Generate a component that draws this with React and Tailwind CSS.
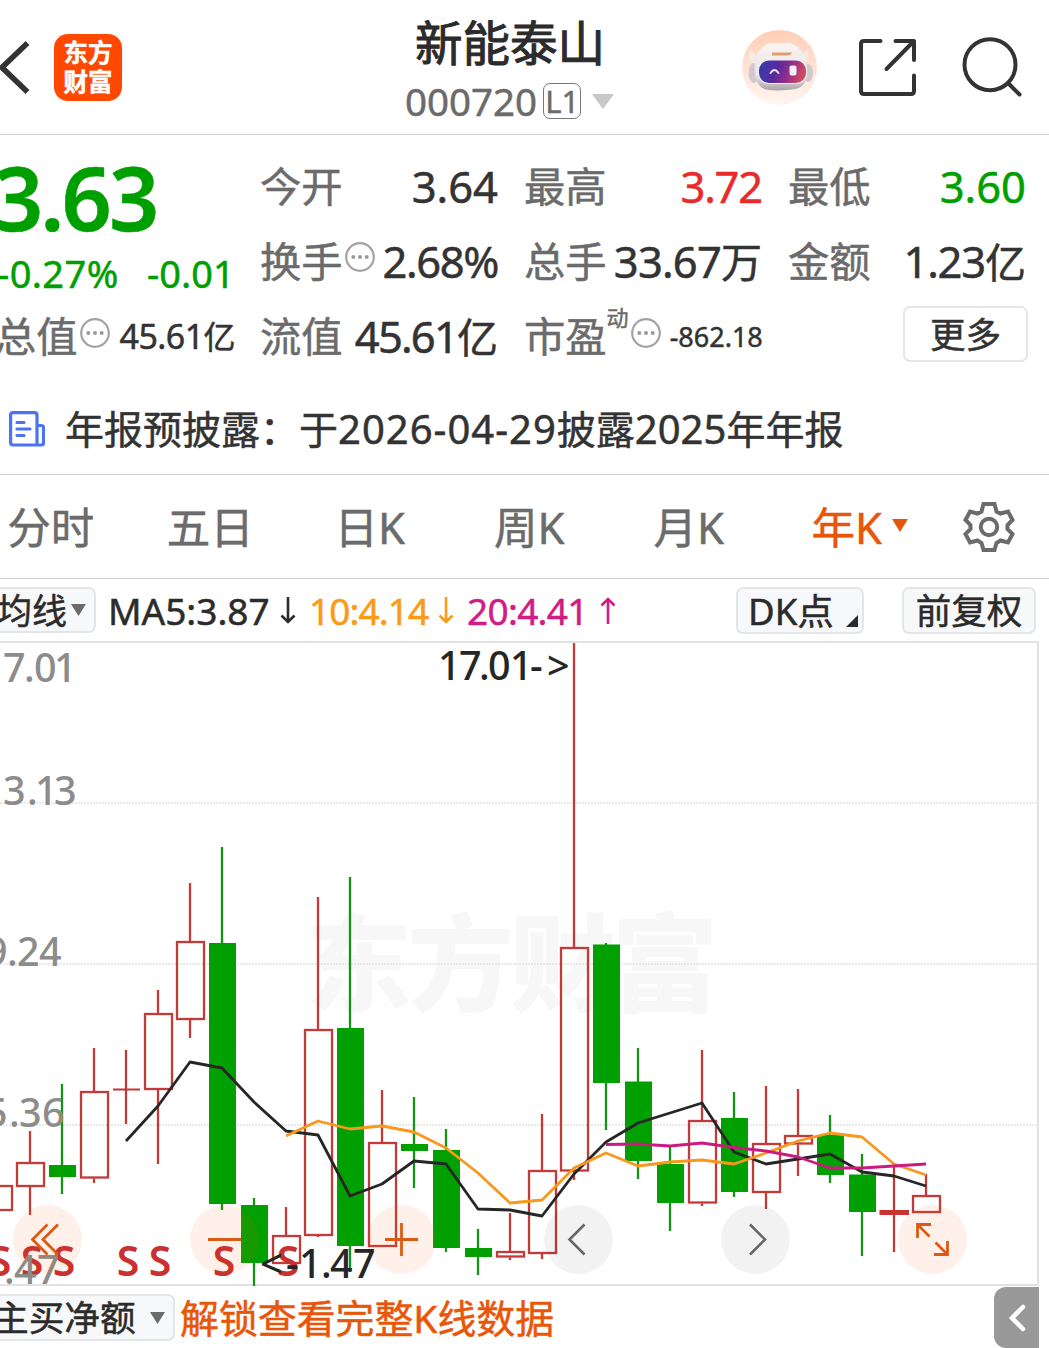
const candles = [
  // [x, high, bodyTop, bodyBottom, low, direction]
  [-2, 1185, 1185, 1211, 1211, "up"],
  [30, 1131, 1162, 1187, 1215, "up"],
  [62, 1084, 1165, 1177, 1194, "down"],
  [94, 1048, 1091, 1178.5, 1183, "up"],
  [126, 1050, 1088.5, 1090.5, 1124, "flat"],
  [158, 990, 1013, 1090, 1164, "up"],
  [190, 883, 941, 1020, 1038, "up"],
  [222, 847, 943, 1204, 1210, "down"],
  [254, 1198, 1205, 1263, 1286, "down"],
  [286, 1207, 1235, 1264, 1264, "up"],
  [318, 897, 1029, 1236, 1237, "up"],
  [350, 877, 1028, 1246, 1272, "down"],
  [382, 1090, 1142, 1247, 1247, "up"],
  [414, 1097, 1144, 1151, 1188, "down"],
  [446, 1129, 1150, 1248, 1252, "down"],
  [478, 1229, 1248, 1257, 1275, "down"],
  [510, 1213, 1251, 1257.5, 1260, "up"],
  [542, 1114, 1170, 1254, 1259, "up"],
  [574, 643, 947, 1171.5, 1180, "up"],
  [606, 943, 944.5, 1083, 1130, "down"],
  [638, 1048, 1081.5, 1161, 1179, "down"],
  [670, 1146, 1164, 1203, 1231, "down"],
  [702, 1050, 1120, 1203.5, 1206, "up"],
  [734, 1092, 1118, 1192, 1197, "down"],
  [766, 1086, 1143, 1193, 1209, "up"],
  [798, 1089, 1135, 1144.5, 1176, "up"],
  [830, 1115, 1135, 1175, 1183, "down"],
  [862, 1154, 1174.5, 1212, 1256, "down"],
  [894, 1163, 1210, 1215, 1252, "flat"],
  [926, 1174, 1195, 1213, 1213, "up"],
];

const ma5 =
  "126,1141 158,1106 190,1062 222,1068 254,1102 286,1131 318,1135 350,1196 382,1184 414,1161 446,1164 478,1209 510,1210 542,1216 574,1174 606,1142 638,1123 670,1113 702,1103 734,1152 766,1164 798,1159 830,1154 862,1172 894,1176 926,1186";
const ma10 =
  "286,1136 318,1121 350,1129 382,1126 414,1132 446,1148 478,1173 510,1203 542,1200 574,1168 606,1153 638,1166 670,1162 702,1160 734,1164 766,1153 798,1141 830,1133 862,1137 894,1164 926,1175";
const ma20 =
  "606,1144.5 638,1144 670,1146 702,1143 734,1147.5 766,1151 798,1157 830,1168 862,1168 894,1166 926,1164";

const sellMarks = [0, 32, 64, 128, 160, 224, 288];

const tabs = ["分时", "五日", "日K", "周K", "月K"];

const More = () => (
  <svg className="w-[30px] h-[30px] shrink-0" viewBox="0 0 30 30" fill="none">
    <circle cx="15" cy="15" r="13.8" stroke="#a3a3a3" strokeWidth="2.2" />
    <circle cx="8.3" cy="15" r="2" fill="#999" />
    <circle cx="15" cy="15" r="2" fill="#999" />
    <circle cx="21.7" cy="15" r="2" fill="#999" />
  </svg>
);

const Arrow = ({ up }) => (
  <svg
    className={up ? "w-4 h-[27px] rotate-180" : "w-4 h-[27px]"}
    viewBox="0 0 16 27"
    fill="none"
    stroke="currentColor"
    strokeWidth="2.6"
  >
    <path d="M8 0v24.5M1.5 18.5L8 25l6.500-6.500" />
  </svg>
);

const Header = () => (
  <header className="flex items-start h-[135px] border-b border-[#d3d3d3]">
    {/* Back */}
    <svg className="w-[30px] h-[56px] mt-[40px]" viewBox="0 0 30 56" fill="none">
      <path d="M27.500 3L2 27.500L27.500 52" stroke="#333" strokeWidth="5.500" />
    </svg>

    {/* Logo */}
    <div className="ml-6 mt-[34px] w-[68px] h-[67px] rounded-[14px] bg-[#ff4800] text-white font-bold text-[24.500px] leading-[29px] text-center pt-[4px]">
      <div>东方</div>
      <div>财富</div>
    </div>

    {/* Name and code */}
    <div className="ml-[282px] w-[212px]">
      <h1 className="mt-[11px] h-[66px] leading-[64px] text-[47.500px] text-[#2b2b2b] text-center [-webkit-text-stroke:1px]">
        新能泰山
      </h1>
      <div className="flex items-center h-[48px] text-[#6b6b6b]">
        <span className="ml-[1px] text-[38.500px] leading-[48px]">000720</span>
        <span className="ml-[6px] w-[38px] h-[36px] rounded-[7px] border-[1.500px] border-[#777] text-[31px] leading-[34px] text-center">
          L1
        </span>
        <svg className="ml-[11px] w-[22px] h-[15px]" viewBox="0 0 22 15">
          <path d="M1 0h20q1 0 .4 1L11.800 14q-.8 1-1.600 0L.6 1Q0 0 1 0z" fill="#c8c8c8" />
        </svg>
      </div>
    </div>

    {/* Assistant */}
    <svg className="ml-[126px] mt-[30px] w-[75px] h-[75px]" viewBox="0 0 75 75">
      <defs>
        <linearGradient id="halo" x1="0" y1="0" x2="0" y2="1">
          <stop offset="0" stopColor="#ffceb6" />
          <stop offset="1" stopColor="#fff6f1" />
        </linearGradient>
        <linearGradient id="visor" x1="0" y1="0" x2="1" y2="0.200">
          <stop offset="0" stopColor="#2f3fae" />
          <stop offset="0.450" stopColor="#5a2a9d" />
          <stop offset="0.750" stopColor="#9c2f86" />
          <stop offset="1" stopColor="#c94a62" />
        </linearGradient>
        <linearGradient id="helmet" x1="0" y1="0" x2="0" y2="1">
          <stop offset="0" stopColor="#fbf5f3" />
          <stop offset="0.700" stopColor="#e6e1e4" />
          <stop offset="1" stopColor="#aaa3a8" />
        </linearGradient>
      </defs>
      <circle cx="37.500" cy="37.500" r="37.500" fill="url(#halo)" />
      <path d="M17 26Q11 25 10 19Q4 24 9 32L15 35zM57 25Q64 24 64 18Q69 24 64 32L60 35z" fill="#f3ece9" />
      <ellipse cx="12" cy="43" rx="5.500" ry="10" fill="#cfc9cd" />
      <ellipse cx="66" cy="43" rx="5" ry="9" fill="#cfc9cd" />
      <path d="M12.500 39Q13 15 30 13L46 13Q62 15 65 38Q67 58 50 59.500Q37 61 26 60Q13 58 12.500 39z" fill="url(#helmet)" />
      <path d="M30 22.500h20q-1 3-4 3H30z" fill="#dfa070" />
      <rect x="16" y="29.500" width="49" height="24.500" rx="11" fill="#f5eff6" />
      <rect x="17" y="30.500" width="47" height="22.500" rx="10" fill="url(#visor)" />
      <path d="M28.500 43q4-6 8 0" fill="none" stroke="#e6e1ff" strokeWidth="2" strokeLinecap="round" />
      <rect x="47.500" y="35.500" width="7" height="10" rx="2" fill="#f6efff" />
    </svg>

    {/* Share */}
    <svg className="ml-[41px] mt-[37px] w-[60px] h-[60px]" viewBox="0 0 60 60" fill="none" stroke="#333" strokeWidth="4" strokeLinecap="round">
      <path d="M22.500 4H6Q3 4 3 7v47q0 3 3 3h47q3 0 3-3V38.500M37.500 4H56V23M55 5L28.500 32" strokeLinejoin="round" />
    </svg>

    {/* Search */}
    <svg className="ml-[43px] mt-[36px] w-[62px] h-[62px]" viewBox="0 0 62 62" fill="none" stroke="#333" strokeWidth="4" strokeLinecap="round">
      <circle cx="29" cy="28.700" r="25.500" />
      <path d="M47.500 47.500L58.500 58.500" />
    </svg>
  </header>
);

const Cell = ({ label, value, unit, className = "text-[#333]", children }) => (
  <div className="flex items-center justify-between h-[75px] text-[43.500px] leading-none whitespace-nowrap">
    <span className="flex items-center text-[41.300px] text-[#6b6b6b]">
      {label}
      {children}
    </span>
    <span className={className}>
      {value}
      {unit && <span className="text-[41px] tracking-normal">{unit}</span>}
    </span>
  </div>
);

const Quote = () => (
  <section className="flex h-[240px] pt-[14px]">
    {/* Price */}
    <div className="w-[260px] shrink-0 text-[#009f00] whitespace-nowrap">
      <div className="h-[96px] -ml-[7px] text-[88px] leading-[97px] font-semibold tracking-[-3px]">
        3.63
      </div>
      <div className="flex h-[54px] items-center pt-[2px] text-[38px] leading-none">
        <span className="-ml-[3px] w-[150px] tracking-[0.4px]">-0.27%</span>
        <span>-0.01</span>
      </div>
      <div className="flex items-center h-[75px] w-[235px] text-[#333]">
        <span className="-ml-[5px] text-[41.300px] text-[#6b6b6b]">总值</span>
        <div className="ml-[2px] mb-[8px]"><More /></div>
        <span className="ml-[10px] text-[34px] tracking-[-0.6px]">
          45.61<span className="text-[32px]">亿</span>
        </span>
      </div>
    </div>

    {/* Details */}
    <div className="w-[238px] shrink-0">
      <Cell label="今开" value="3.64" />
      <Cell label="换手" value="2.68%" className="text-[#333] tracking-[-1.4px]">
        <div className="ml-[2px] mb-[8px]"><More /></div>
      </Cell>
      <Cell label="流值" value="45.61" unit="亿" className="text-[#333] tracking-[-1.8px]" />
    </div>
    <div className="w-[238px] shrink-0 ml-[26px]">
      <Cell label="最高" value="3.72" className="text-[#ea2a2a] tracking-[-1.2px]" />
      <Cell label="总手" value="33.67" unit="万" className="text-[#333] tracking-[-0.8px]" />
      <div className="flex items-center h-[75px] leading-none whitespace-nowrap">
        <span className="text-[41.300px] text-[#6b6b6b]">市盈</span>
        <span className="mb-[40px] text-[22px] text-[#6b6b6b]">动</span>
        <div className="ml-[2px] mb-[8px]"><More /></div>
        <span className="ml-[9px] text-[27px] text-[#333]">-862.18</span>
      </div>
    </div>
    <div className="w-[238px] shrink-0 ml-[26px]">
      <Cell label="最低" value="3.60" className="text-[#009f00]" />
      <Cell label="金额" value="1.23" unit="亿" className="text-[#333] tracking-[-1.2px]" />
      <div className="flex justify-end pt-[7px] -mr-[2px]">
        <button className="w-[125px] h-[56px] rounded-[7px] border-2 border-[#e6e6e8] text-[35.500px] leading-[50px] text-[#333]">
          更多
        </button>
      </div>
    </div>
  </section>
);

const News = () => (
  <section className="flex items-center h-[100px] pt-[8px] border-b border-[#d3d3d3]">
    <svg className="ml-[9px] w-[36px] h-[36px]" viewBox="0 0 36 36" fill="none" stroke="#4d74f0" strokeWidth="3.200" strokeLinecap="round">
      <path d="M28 34H4q-2.400 0-2.400-2.400V4Q1.600 1.600 4 1.600h21.500Q28 1.600 28 4zM28 14.500h4.500q2 0 2 2V32q0 2-2 2H28M8 11.500h7M8 18h13M8 24.500h7" />
    </svg>
    <p className="ml-[20px] text-[39px] leading-none text-[#333] whitespace-nowrap">
      年报预披露：于<span className="text-[40px] tracking-[1px]">2026-04-29</span>披露
      <span className="text-[40px]">2025</span>年年报
    </p>
  </section>
);

const Tabs = () => (
  <nav className="flex items-center h-[104px] border-b border-[#d3d3d3] text-[43.500px] leading-none text-[#6b6b6b] whitespace-nowrap">
    <div className="flex -ml-[29px] pt-[3px]">
      {tabs.map((t) => (
        <div key={t} className="w-[159.500px] text-center">{t}</div>
      ))}
    </div>
    <div className="ml-[43px] w-[74px] pt-[3px] text-[#e8560a]">年K</div>
    <svg className="ml-[6px] mb-[3px] w-[16px] h-[13px]" viewBox="0 0 16 13">
      <path d="M0 0h16L8 13z" fill="#e8560a" />
    </svg>
    <svg className="ml-[55px] w-[52px] h-[52px]" viewBox="0 0 52 52" fill="none" stroke="#6b6b6b" strokeWidth="4">
      <path d="M20.500 3H31.500L33.500 10.500L37.500 12.500L45 10.500L49.500 19L44.500 24V28L49.500 33L45 41.500L37.500 39.500L33.500 42L31.500 49H20.500L18.500 42L14.500 39.500L7 41.500L2.500 33L7.500 28V24L2.500 19L7 10.500L14.500 12.500L18.500 10.500Z" />
      <circle cx="26" cy="26" r="8.200" />
    </svg>
  </nav>
);

const Indicators = () => (
  <div className="flex items-center h-[62px] text-[37px] leading-none text-[#2b2b2b] whitespace-nowrap">
    <button className="flex items-center -ml-[10px] w-[106px] h-[46px] rounded-[7px] border-2 border-[#e3e5e8] bg-[#f7f8fa] text-[35px]">
      <span className="ml-[5px]">均线</span>
      <svg className="ml-[4px] w-[15px] h-[12px]" viewBox="0 0 15 12">
        <path d="M0 0h15L7.500 12z" fill="#6b6b6b" />
      </svg>
    </button>
    <div className="flex items-center">
      <span className="ml-[12px] w-[172px]">MA5:3.87</span>
      <Arrow />
      <span className="flex items-center text-[#fb9a16]">
        <span className="ml-[13px] w-[129px] tracking-[-0.9px]">10:4.14</span>
        <Arrow />
      </span>
      <span className="flex items-center text-[#d21c85]">
        <span className="ml-[13px] w-[133px] tracking-[-0.7px]">20:4.41</span>
        <Arrow up />
      </span>
    </div>
    <button className="relative ml-auto w-[128px] h-[47px] rounded-[7px] border-2 border-[#e3e5e8] bg-[#f7f8fa] text-[36.500px] leading-[44px] text-left pl-[10px]">
      DK点
      <svg className="absolute right-[4px] bottom-[5px] w-[12px] h-[12px]" viewBox="0 0 12 12">
        <path d="M12 0v12H0z" fill="#2b2b2b" />
      </svg>
    </button>
    <button className="ml-[38px] mr-[13px] w-[134px] h-[47px] rounded-[7px] border-2 border-[#e3e5e8] bg-[#f7f8fa] text-[35.500px] leading-[42px]">
      前复权
    </button>
  </div>
);

const Candle = ({ data }) => {
  const [x, high, top, bottom, low, dir] = data;
  if (dir === "up") {
    return (
      <g stroke="#c43a38" strokeWidth="2.300" fill="none">
        <path d={`M${x} ${high}V${top}M${x} ${bottom}V${low}`} />
        <rect x={x - 13} y={top + 1} width="27" height={bottom - top - 2} />
      </g>
    );
  }
  const color = dir === "down" ? "#00a000" : "#c93431";
  return (
    <g>
      <path d={`M${x} ${high}V${low}`} stroke={dir === "down" ? "#159315" : "#b83a3a"} strokeWidth="2.300" />
      <rect x={x - (bottom - top === 5 ? 14.500 : 13)} y={top} width={bottom - top === 5 ? 29.500 : 27} height={bottom - top} fill={color} />
    </g>
  );
};

const Chart = () => (
  <svg className="block w-[1049px] h-[646px]" viewBox="0 641 1049 646" fill="none">
    {/* Watermark */}
    <text x="306" y="1003" fontSize="106" fontWeight="900" fill="#f7f7f7" textLength="412">东方财富</text>

    {/* Frame and grid */}
    <path d="M0 642H1038V1285H0" stroke="#e2e2e2" strokeWidth="2" />
    {[803, 964, 1125].map((y) => (
      <path key={y} d={`M0 ${y}H1038`} stroke="#e2e2e2" strokeWidth="1.500" strokeDasharray="2 1" />
    ))}

    {candles.map((c) => (
      <Candle key={c[0]} data={c} />
    ))}

    {/* Moving averages */}
    <g strokeWidth="2.800" strokeLinejoin="round">
      <polyline points={ma5} stroke="#262626" />
      <polyline points={ma10} stroke="#f8981d" />
      <polyline points={ma20} stroke="#cd1a80" />
    </g>

    {/* Sell marks */}
    <g fontSize="41" fontWeight="600" fill="#c9302f" textAnchor="middle">
      {sellMarks.map((x) => (
        <text key={x} x={x} y="1275.500">S</text>
      ))}
    </g>

    {/* Price axis */}
    <g fontSize="39.500" fontWeight="500" fill="#8c8c8c">
      <text x="3 24 34 54" y="681.500">7.01</text>
      <text x="3 27 35 54" y="804.500">3.13</text>
      <text x="-15 7 17 39" y="965.500">9.24</text>
      <text x="-15 9 19 42" y="1126.500">5.36</text>
      <text x="4 14 37" y="1283.500">.47</text>
    </g>

    {/* Controls */}
    <g fill="#ff5a00" fillOpacity="0.085">
      <circle cx="47.500" cy="1239.500" r="34.500" />
      <circle cx="224.500" cy="1239.500" r="34.500" />
      <circle cx="401.500" cy="1239.500" r="34.500" />
      <circle cx="932.500" cy="1239.500" r="34.500" />
    </g>
    <g fill="#000" fillOpacity="0.05">
      <circle cx="578.500" cy="1239.500" r="34.500" />
      <circle cx="755.500" cy="1239.500" r="34.500" />
    </g>
    <g stroke="#dc5b14" strokeWidth="2.800">
      <path d="M47.500 1224.500L32.500 1239.500L47.500 1254.500M58 1224.500L43 1239.500L58 1254.500" />
      <path d="M208 1239.500H241" />
      <path d="M385 1239.500H418M401.500 1223V1256" />
      <path d="M917.500 1238V1224.500H931M918 1225L929.500 1236.500M947.500 1241V1254.500H934M947 1254L935.500 1242.500" />
    </g>
    <g stroke="#666" strokeWidth="2.600">
      <path d="M584.500 1224.500L569.500 1239.500L584.500 1254.500" />
      <path d="M750 1224.500L765 1239.500L750 1254.500" />
    </g>

    {/* Extremes */}
    <g fontSize="39.500" fontWeight="500" fill="#262626">
      <text x="438 459 479 488 510 530 547" y="679.500">17.01-&gt;</text>
      <text x="260 286 299 321 330 353" y="1278">&lt;-1.47</text>
    </g>
  </svg>
);

const Footer = () => (
  <div className="flex h-[61px] text-[#2b2b2b] whitespace-nowrap">
    <button className="flex items-center mt-[7px] -ml-[10px] w-[185px] h-[47px] rounded-[7px] border-2 border-[#e3e5e8] bg-[#f7f8fa] text-[35.700px] leading-none">
      <span className="ml-[1px]">主买净额</span>
      <svg className="ml-[14px] w-[15px] h-[12px]" viewBox="0 0 15 12">
        <path d="M0 0h15L7.500 12z" fill="#6b6b6b" />
      </svg>
    </button>
    <p className="ml-[5px] text-[38.900px] leading-[61px] text-[#e8560a]">解锁查看完整K线数据</p>
    <button className="flex items-center justify-center ml-auto mr-[10px] w-[45px] h-[61px] rounded-l-[12px] bg-[#999]">
      <svg className="w-[18px] h-[28px]" viewBox="0 0 18 28" fill="none">
        <path d="M15 3L4 14L15 25" stroke="#fff" strokeWidth="4.500" strokeLinecap="round" />
      </svg>
    </button>
  </div>
);

const App = () => {
  return (
    <div className="w-[1049px] h-[1348px] overflow-hidden bg-white font-['Noto_Sans','Noto_Sans_CJK_SC',sans-serif] [-webkit-text-stroke:0.5px]">
      <Header />
      <Quote />
      <News />
      <Tabs />
      <Indicators />
      <Chart />
      <Footer />
    </div>
  );
};

export default App;
